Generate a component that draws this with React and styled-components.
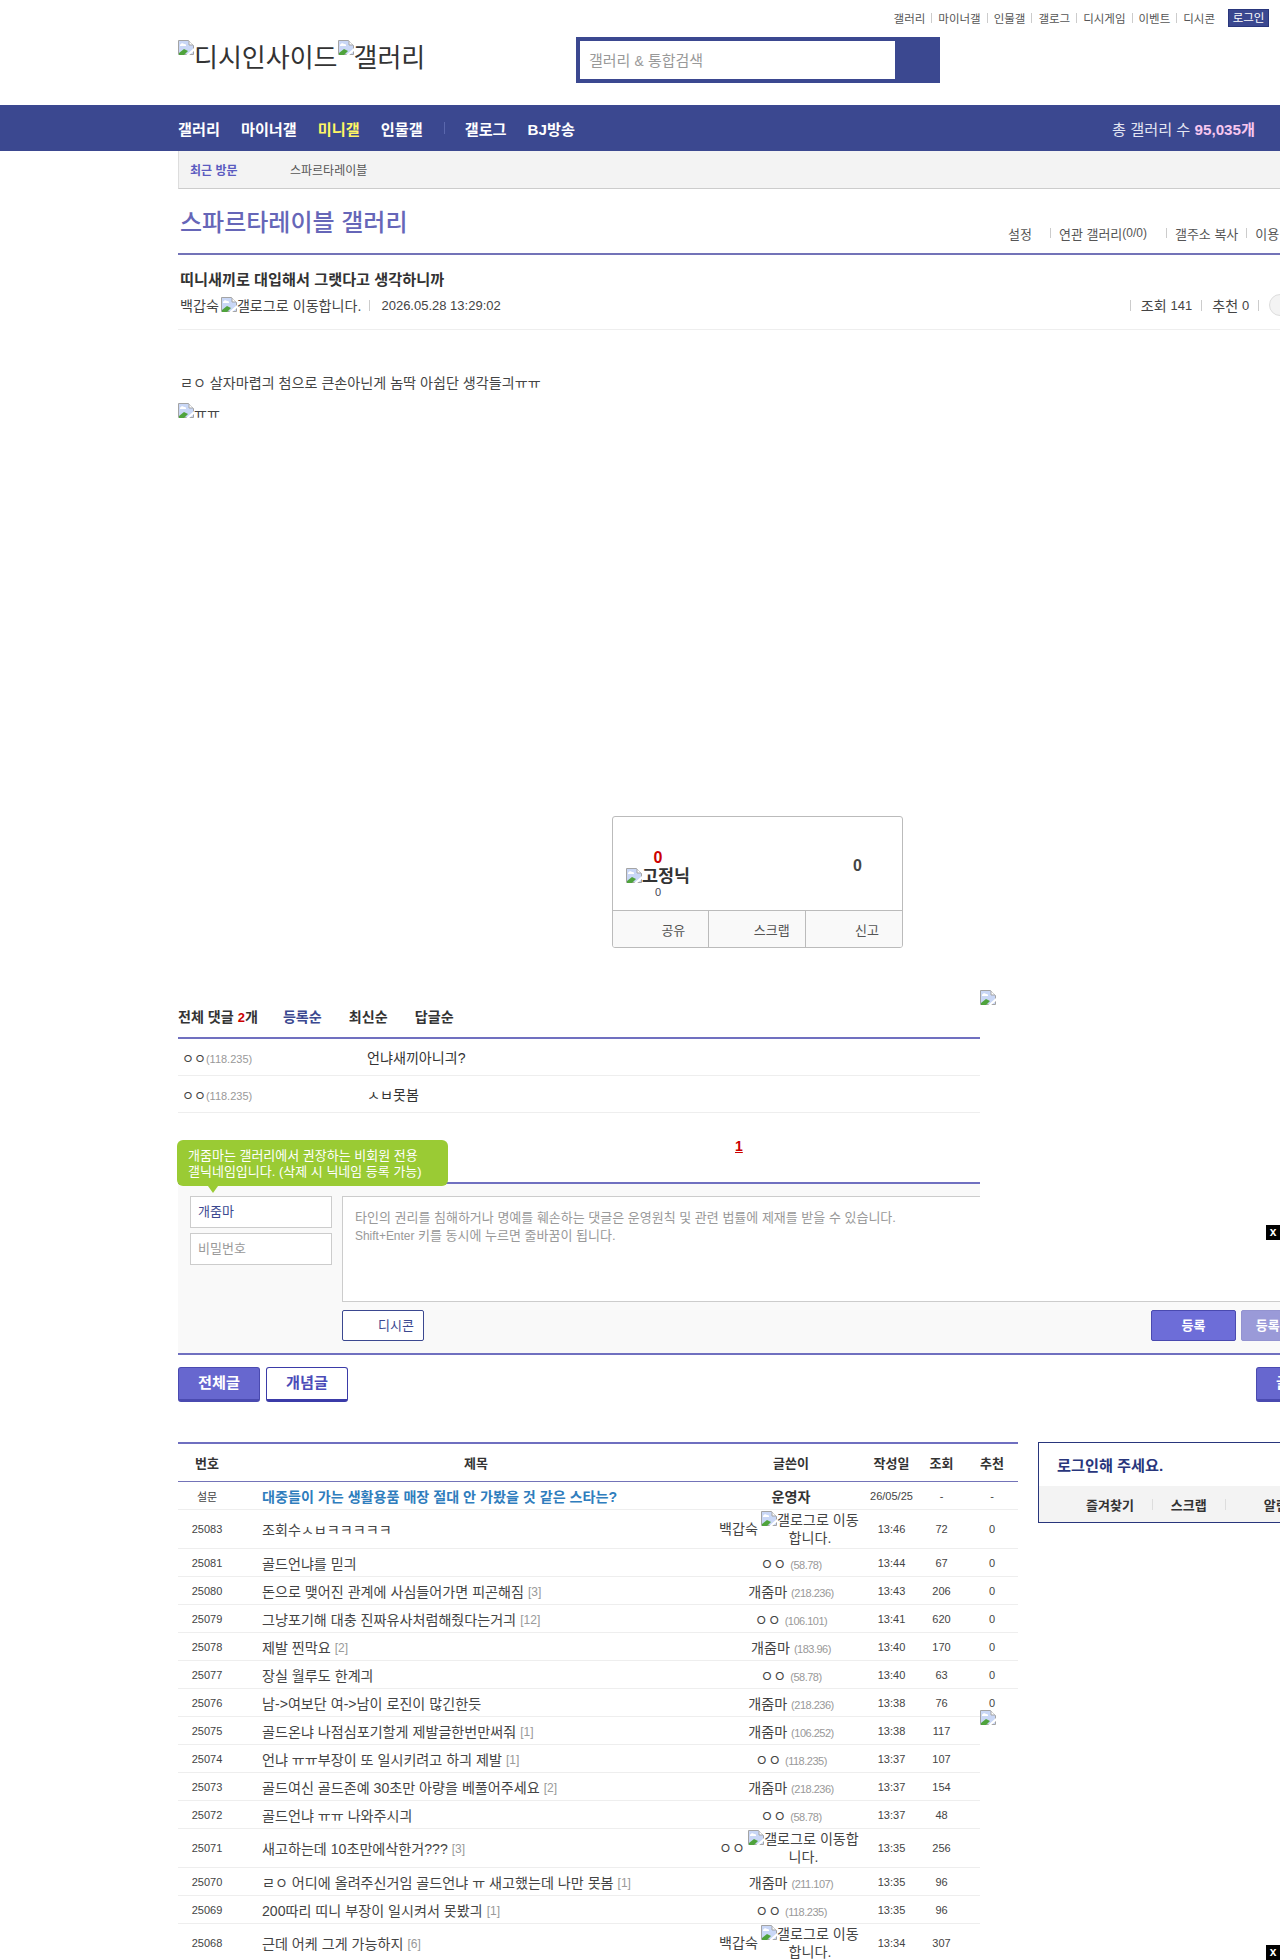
import React from 'react';
import styled, { createGlobalStyle } from 'styled-components';

// hangul in the reference runs a full em wide and Noto runs 0.92em,
// so hangul text sits ~8% above the nominal size and latin runs scale back
const GlobalStyle = createGlobalStyle`
  html, body {
    margin: 0;
    padding: 0;
    background: #fff;
  }
  body {
    font-family: "Liberation Sans", "Noto Sans CJK KR", sans-serif;
    font-size: 13px;
    color: #333;
  }
`;

const Latin = styled.span`
  font-size: .92em;
`;

const Page = styled.div`
  position: relative;
  width: 1280px;
  height: 1960px;
  overflow: hidden;
`;

const Header = styled.header`
  height: 105px;
  padding-left: 178px;
  box-sizing: border-box;
`;

const TopLinks = styled.div`
  display: flex;
  align-items: center;
  justify-content: flex-end;
  height: 18px;
  padding: 9px 11px 0 0;
  font-size: 11.5px;
  color: #555;
`;

const TopLink = styled.span`
  display: flex;
  align-items: center;
  &:not(:last-of-type)::after {
    content: '';
    width: 1px;
    height: 10px;
    margin: 0 6px;
    background: #ccc;
  }
`;

const LoginButton = styled.a`
  box-sizing: border-box;
  width: 41px;
  height: 18px;
  margin-left: 13px;
  border: 1px solid #29367c;
  background: #3b4890;
  color: #fff;
  text-align: center;
  line-height: 16px;
`;

const HeaderMain = styled.div`
  display: flex;
  align-items: flex-start;
  padding-top: 10px;
`;

const Logo = styled.div`
  display: flex;
  width: 398px;
  padding-top: 3px;
  font-size: 26px;
  line-height: 36px;
  color: #333;
`;

const LogoPart = styled.span`
  display: flex;
  align-items: flex-start;
`;

const SearchBox = styled.div`
  display: flex;
  width: 364px;
  height: 46px;
  box-sizing: border-box;
  border: 4px solid #3b4890;
  background: #3b4890;
`;

const SearchInput = styled.div`
  width: 306px;
  padding-left: 9px;
  background: #fff;
  color: #999;
  font-size: 15px;
  line-height: 39px;
`;

const Nav = styled.nav`
  display: flex;
  align-items: center;
  height: 46px;
  padding: 0 25px 0 178px;
  background: #3b4890;
  color: #fff;
`;

const NavItem = styled.span`
  margin-right: 21px;
  font-size: 15.2px;
  font-weight: bold;
  color: ${(p) => (p.$active ? '#fff664' : '#fff')};
`;

const NavDivider = styled.span`
  width: 1px;
  height: 12px;
  margin-right: 20px;
  background: #5a67ad;
`;

const NavTotal = styled.span`
  margin-left: auto;
  font-size: 15.2px;
  color: #e3e5f2;
  b {
    color: #f7c6ef;
  }
`;

const Main = styled.main`
  width: 1160px;
  margin-left: 178px;
`;

const RecentBar = styled.div`
  display: flex;
  align-items: center;
  height: 38px;
  box-sizing: border-box;
  padding-left: 11px;
  background: #f3f3f3;
  border-left: 1px solid #ddd;
  border-bottom: 1px solid #ccc;
  font-size: 12px;
`;

const RecentLabel = styled.b`
  width: 100px;
  color: #5b5bc0;
`;

const RecentName = styled.span`
  color: #555;
`;

const GalleryHead = styled.div`
  display: flex;
  justify-content: space-between;
  height: 64px;
  padding: 0 2px;
  border-bottom: 2px solid #7373b8;
`;

const GalleryTitle = styled.h1`
  margin: 16px 0 0;
  font-size: 24px;
  font-weight: 500;
  line-height: 36px;
  color: #6666b8;
`;

const GalleryLinks = styled.div`
  display: flex;
  align-items: center;
  width: 328px;
  height: 18px;
  margin-top: 35px;
  font-size: 13px;
  color: #555;
`;

const GalleryLink = styled.span`
  display: flex;
  align-items: center;
  white-space: pre;
  margin-right: 8px;
  &::after {
    content: '';
    display: ${(p) => (p.$noSep ? 'none' : 'block')};
    width: 1px;
    height: 10px;
    margin-left: ${(p) => p.$sep}px;
    background: #ccc;
  }
`;

const PostHead = styled.div`
  height: 75px;
  box-sizing: border-box;
  padding: 15px 2px 0;
  border-bottom: 1px solid #eee;
`;

const PostTitle = styled.h2`
  margin: 0;
  font-size: 15.2px;
  font-weight: bold;
  line-height: 20px;
  color: #333;
`;

const PostMeta = styled.div`
  display: flex;
  align-items: center;
  height: 24px;
  margin-top: 3px;
  font-size: 14.1px;
  color: #444;
  white-space: pre;
`;

const MetaIcon = styled.span`
  display: flex;
  margin-left: 2px;
`;

const MetaDate = styled.span`
  display: flex;
  align-items: center;
  margin-left: 8px;
  font-size: 13px;
  &::before {
    content: '';
    width: 1px;
    height: 11px;
    margin-right: 11px;
    background: #ccc;
  }
`;

const MetaCounts = styled.div`
  display: flex;
  align-items: center;
  margin-left: 620px;
`;

const MetaCount = styled.span`
  display: flex;
  align-items: center;
  white-space: pre;
  &::before {
    content: '';
    width: 1px;
    height: 11px;
    margin: 0 10px 0 9px;
    background: #ccc;
  }
`;

const RoundButton = styled.span`
  width: 22px;
  height: 22px;
  box-sizing: border-box;
  flex: none;
  border: 1px solid #ddd;
  border-radius: 50%;
  background: #f3f3f3;
`;

const PostBody = styled.div`
  padding: 43px 2px 0;
  font-size: 14.1px;
  line-height: 20px;
  color: #444;
`;

const AltImage = styled.div`
  display: flex;
  align-items: flex-start;
  height: 413px;
  margin: 10px 0 0 -2px;
  line-height: 20px;
`;

const RecBox = styled.section`
  width: 291px;
  height: 132px;
  margin-left: 434px;
  box-sizing: border-box;
  border: 1px solid #bbb;
  border-radius: 3px;
  overflow: hidden;
  display: flex;
  flex-direction: column;
`;

const RecTop = styled.div`
  position: relative;
  height: 93px;
  border-bottom: 1px solid #bbb;
  flex: none;
`;

const RecLeft = styled.div`
  display: flex;
  flex-direction: column;
  align-items: center;
  width: 64px;
  margin: 32px 0 0 13px;
  color: #333;
`;

const RecUp = styled.b`
  font-size: 16px;
  line-height: 18px;
  color: #c00;
`;

const RecNick = styled.b`
  display: flex;
  align-items: center;
  margin-top: -1px;
  font-size: 17.4px;
  line-height: 20px;
  color: #333;
`;

const RecSmall = styled.span`
  font-size: 11px;
  line-height: 12px;
  color: #445;
`;

const RecDown = styled.b`
  position: absolute;
  right: 40px;
  top: 40px;
  font-size: 16px;
  line-height: 18px;
  color: #444;
`;

const RecActions = styled.div`
  display: grid;
  grid-template-columns: repeat(3, 1fr);
  flex: 1;
  background: #f9f9f9;
`;

const RecAction = styled.span`
  box-sizing: border-box;
  text-align: right;
  padding-right: ${(p) => p.$pad}px;
  border-right: 1px solid #bbb;
  font-size: 13px;
  line-height: 40px;
  color: #555;
  &:last-child {
    border-right: 0;
  }
`;

const CommentTabs = styled.div`
  display: flex;
  align-items: center;
  height: 20px;
  margin-top: 58px;
  padding-bottom: 11px;
  border-bottom: 2px solid #7070c0;
  font-size: 14.1px;
  font-weight: bold;
  color: #333;
  em {
    font-size: .92em;
    font-style: normal;
    color: #c00;
  }
`;

const CommentTab = styled.span`
  margin-right: ${(p) => p.$gap || 27}px;
  color: ${(p) => (p.$active ? '#3b4890' : '#333')};
`;

const CommentRow = styled.div`
  display: flex;
  align-items: center;
  height: 37px;
  box-sizing: border-box;
  padding-left: 4px;
  border-bottom: 1px solid #eee;
`;

const CommentNick = styled.span`
  width: 185px;
  font-size: 13px;
  color: #444;
  small {
    font-size: 11px;
    color: #999;
  }
`;

const CommentText = styled.span`
  font-size: 14.1px;
  color: #333;
`;

const CommentPager = styled.div`
  position: relative;
  height: 69px;
  border-bottom: 2px solid #7070c0;
  text-align: center;
`;

const PagerNumber = styled.a`
  position: absolute;
  left: 557px;
  top: 25px;
  font-size: 14px;
  font-weight: bold;
  color: #c00;
  text-decoration: underline;
`;

const Tooltip = styled.div`
  position: absolute;
  left: -1px;
  top: 27px;
  width: 271px;
  height: 46px;
  box-sizing: border-box;
  padding: 8px 11px;
  border-radius: 6px;
  background: #9acb34;
  color: #fff;
  font-size: 13px;
  line-height: 16px;
  text-align: left;
  white-space: nowrap;
  &::after {
    content: '';
    position: absolute;
    left: 31px;
    top: 46px;
    border: 5px solid transparent;
    border-top: 7px solid #9acb34;
    border-bottom: 0;
  }
`;

const CommentForm = styled.div`
  height: 171px;
  box-sizing: border-box;
  padding: 12px 12px 0;
  background: #f9f9f9;
  border-bottom: 2px solid #7070c0;
`;

const FormTop = styled.div`
  display: flex;
  gap: 10px;
`;

const FormFields = styled.div`
  display: flex;
  flex-direction: column;
  gap: 5px;
  width: 142px;
`;

const FormInput = styled.div`
  height: 32px;
  box-sizing: border-box;
  padding-left: 7px;
  border: 1px solid #ccc;
  background: #fff;
  font-size: 13px;
  line-height: 30px;
  color: ${(p) => (p.$filled ? '#3b4890' : '#999')};
`;

const FormText = styled.div`
  flex: 1;
  height: 106px;
  box-sizing: border-box;
  padding: 12px 12px 0;
  border: 1px solid #ccc;
  background: #fff;
  font-size: 13px;
  line-height: 18px;
  color: #999;
  white-space: nowrap;
`;

const FormBottom = styled.div`
  display: flex;
  align-items: center;
  margin: 8px 0 0 152px;
`;

const DcconButton = styled.span`
  box-sizing: border-box;
  width: 82px;
  height: 31px;
  padding-right: 9px;
  border: 1px solid #3b4890;
  border-radius: 2px;
  background: #fff;
  text-align: right;
  font-size: 13px;
  line-height: 29px;
  color: #3b4890;
`;

const SubmitButton = styled.span`
  box-sizing: border-box;
  width: 85px;
  height: 31px;
  flex: none;
  margin-left: ${(p) => p.$gap}px;
  border: 1px solid ${(p) => (p.$dim ? '#9393d0' : '#4a4ab0')};
  border-radius: 2px;
  background: ${(p) => (p.$dim ? '#9a9ad8' : '#6d6dd8')};
  color: #fff;
  text-align: center;
  font-size: 13px;
  font-weight: bold;
  line-height: 29px;
  white-space: nowrap;
`;

const ListTabs = styled.div`
  display: flex;
  gap: 6px;
  margin-top: 12px;
`;

const ListTab = styled.span`
  box-sizing: border-box;
  width: 82px;
  height: 35px;
  margin-left: ${(p) => p.$push || 0}px;
  border: 1px solid ${(p) => (p.$filled ? '#4a4ab0' : '#3b3ba8')};
  border-bottom-width: 3px;
  border-radius: 3px;
  background: ${(p) => (p.$filled ? '#6767cf' : '#fff')};
  color: ${(p) => (p.$filled ? '#fff' : '#4b4bb8')};
  text-align: center;
  font-size: 15.2px;
  font-weight: bold;
  line-height: 30px;
`;

const ListArea = styled.div`
  display: flex;
  gap: 20px;
  margin-top: 40px;
`;

const ListTable = styled.table`
  width: 840px;
  flex: none;
  border-collapse: collapse;
  table-layout: fixed;
  border-top: 2px solid #6f6fc0;
`;

const HeadCell = styled.th`
  height: 37px;
  padding: 0;
  border-bottom: 1px solid #7373b8;
  font-size: 13px;
  font-weight: bold;
  color: #333;
  text-align: center;
`;

const Row = styled.tr`
  height: ${(p) => (p.$tall ? 39 : 28)}px;
  td {
    border-bottom: 1px solid #eee;
  }
`;

const NumCell = styled.td`
  padding: 0;
  text-align: center;
  font-size: 11px;
  color: #444;
`;

const TitleCell = styled.td`
  padding: 0 0 0 26px;
  font-size: 14.1px;
  color: #444;
  white-space: nowrap;
  small {
    font-size: 12px;
    color: #999;
    margin-left: 4px;
    vertical-align: 1px;
  }
`;

const NoticeTitle = styled.b`
  color: #2f7dbd;
`;

const WriterCell = styled.td`
  padding: 0;
  text-align: center;
  font-size: 14.1px;
  color: #444;
  small {
    font-size: 11px;
    letter-spacing: -.5px;
    color: #999;
  }
`;

const StaffName = styled.b`
  color: #333;
`;

const WriterSplit = styled.div`
  display: flex;
  align-items: center;
  padding: 0 4px 0 3px;
  line-height: 18px;
`;

const WriterAlt = styled.span`
  flex: 1;
  text-align: center;
  white-space: nowrap;
`;

const SidePanel = styled.aside`
  width: 300px;
  height: 81px;
  box-sizing: border-box;
  flex: none;
  border: 1px solid #29367c;
`;

const SideTitle = styled.div`
  height: 43px;
  padding-left: 18px;
  font-size: 15.2px;
  font-weight: bold;
  line-height: 45px;
  color: #29367c;
`;

const SideLinks = styled.div`
  display: flex;
  align-items: center;
  height: 36px;
  padding-left: 47px;
  background: #f3f3f3;
  font-size: 13px;
  font-weight: bold;
  color: #333;
`;

const SideLink = styled.span`
  display: flex;
  align-items: center;
  white-space: nowrap;
  &:not(:last-child)::after {
    content: '';
    width: 1px;
    height: 11px;
    margin: 0 ${(p) => p.$after}px 0 18px;
    background: #ddd;
  }
`;

const AdSlot = styled.div`
  position: absolute;
  left: 980px;
  top: ${(p) => p.$top}px;
  width: 300px;
  height: 250px;
  background: #fff;
`;

const AdClose = styled.span`
  position: absolute;
  right: 0;
  bottom: 0;
  width: 14px;
  height: 15px;
  background: #000;
  color: #fff;
  font-size: 12px;
  font-weight: bold;
  line-height: 14px;
  text-align: center;
`;

const BrokenSvg = styled.svg`
  flex: none;
  vertical-align: top;
`;

function BrokenImage() {
  return (
    <BrokenSvg width="16" height="16" viewBox="0 0 16 16">
      <path d="M.5.5h10l5 5v9h-15z" fill="#c9d7f6" stroke="#a4a4a4" />
      <path d="M11 1v4h4" fill="#fff" stroke="#a4a4a4" />
      <path d="M2 5c1-2 3-2 4-1 1 0 2 0 2 1v1H2z" fill="#fff" />
      <path d="M1 15v-2l5-4 4 2-4 4z" fill="#4fa33c" />
      <path d="M16 8 7 16h3l6-5z" fill="#fff" />
    </BrokenSvg>
  );
}

const topLinks = ['갤러리', '마이너갤', '인물갤', '갤로그', '디시게임', '이벤트', '디시콘'];

const rows = [
  { no: '25083', title: '조회수ㅅㅂㅋㅋㅋㅋㅋ', nick: '백갑숙', alt: ['갤로그로 이동', '합니다.'], time: '13:46', view: 72 },
  { no: '25081', title: '골드언냐를 믿긔', nick: 'ㅇㅇ', ip: '(58.78)', time: '13:44', view: 67 },
  { no: '25080', title: '돈으로 맺어진 관계에 사심들어가면 피곤해짐', cnt: '[3]', nick: '개줌마', ip: '(218.236)', time: '13:43', view: 206 },
  { no: '25079', title: '그냥포기해 대충 진짜유사처럼해줬다는거긔', cnt: '[12]', nick: 'ㅇㅇ', ip: '(106.101)', time: '13:41', view: 620 },
  { no: '25078', title: '제발 찐막요', cnt: '[2]', nick: '개줌마', ip: '(183.96)', time: '13:40', view: 170 },
  { no: '25077', title: '장실 월루도 한계긔', nick: 'ㅇㅇ', ip: '(58.78)', time: '13:40', view: 63 },
  { no: '25076', title: '남->여보단 여->남이 로진이 많긴한듯', nick: '개줌마', ip: '(218.236)', time: '13:38', view: 76 },
  { no: '25075', title: '골드온냐 나점심포기할게 제발글한번만써줘', cnt: '[1]', nick: '개줌마', ip: '(106.252)', time: '13:38', view: 117 },
  { no: '25074', title: '언냐 ㅠㅠ부장이 또 일시키려고 하긔 제발', cnt: '[1]', nick: 'ㅇㅇ', ip: '(118.235)', time: '13:37', view: 107 },
  { no: '25073', title: '골드여신 골드존예 30초만 아량을 베풀어주세요', cnt: '[2]', nick: '개줌마', ip: '(218.236)', time: '13:37', view: 154 },
  { no: '25072', title: '골드언냐 ㅠㅠ 나와주시긔', nick: 'ㅇㅇ', ip: '(58.78)', time: '13:37', view: 48 },
  { no: '25071', title: '새고하는데 10초만에삭한거???', cnt: '[3]', nick: 'ㅇㅇ', alt: ['갤로그로 이동합', '니다.'], time: '13:35', view: 256 },
  { no: '25070', title: 'ㄹㅇ 어디에 올려주신거임 골드언냐 ㅠ 새고했는데 나만 못봄', cnt: '[1]', nick: '개줌마', ip: '(211.107)', time: '13:35', view: 96 },
  { no: '25069', title: '200따리 띠니 부장이 일시켜서 못봤긔', cnt: '[1]', nick: 'ㅇㅇ', ip: '(118.235)', time: '13:35', view: 96 },
  { no: '25068', title: '근데 어케 그게 가능하지', cnt: '[6]', nick: '백갑숙', alt: ['갤로그로 이동', '합니다.'], time: '13:34', view: 307 },
];

export default function App() {
  return (
    <Page>
      <GlobalStyle />
      <Header>
        <TopLinks>
          {topLinks.map((t) => (
            <TopLink key={t}>{t}</TopLink>
          ))}
          <LoginButton>로그인</LoginButton>
        </TopLinks>
        <HeaderMain>
          <Logo>
            <LogoPart>
              <BrokenImage />
              디시인사이드
            </LogoPart>
            <LogoPart>
              <BrokenImage />
              갤러리
            </LogoPart>
          </Logo>
          <SearchBox>
            <SearchInput>
              갤러리 <Latin>&amp;</Latin> 통합검색
            </SearchInput>
          </SearchBox>
        </HeaderMain>
      </Header>

      <Nav>
        <NavItem>갤러리</NavItem>
        <NavItem>마이너갤</NavItem>
        <NavItem $active>미니갤</NavItem>
        <NavItem>인물갤</NavItem>
        <NavDivider />
        <NavItem>갤로그</NavItem>
        <NavItem>BJ방송</NavItem>
        <NavTotal>
          총 갤러리 수 <b>95,035개</b>
        </NavTotal>
      </Nav>

      <Main>
        <RecentBar>
          <RecentLabel>최근 방문</RecentLabel>
          <RecentName>스파르타레이블</RecentName>
        </RecentBar>

        <GalleryHead>
          <GalleryTitle>스파르타레이블 갤러리</GalleryTitle>
          <GalleryLinks>
            <GalleryLink $sep={18}>설정</GalleryLink>
            <GalleryLink $sep={19}>
              연관 갤러리<Latin>(0/0)</Latin>
            </GalleryLink>
            <GalleryLink $sep={8}>갤주소 복사</GalleryLink>
            <GalleryLink $noSep>이용 안내</GalleryLink>
          </GalleryLinks>
        </GalleryHead>

        <PostHead>
          <PostTitle>띠니새끼로 대입해서 그랫다고 생각하니까</PostTitle>
          <PostMeta>
            백갑숙
            <MetaIcon>
              <BrokenImage />
            </MetaIcon>
            갤로그로 이동합니다.
            <MetaDate>2026.05.28 13:29:02</MetaDate>
            <MetaCounts>
              <MetaCount>
                조회 <Latin>141</Latin>
              </MetaCount>
              <MetaCount>
                추천 <Latin>0</Latin>
              </MetaCount>
              <MetaCount />
              <RoundButton />
            </MetaCounts>
          </PostMeta>
        </PostHead>

        <PostBody>
          ㄹㅇ 살자마렵긔 첨으로 큰손아닌게 놈딱 아쉽단 생각들긔ㅠㅠ
          <AltImage>
            <BrokenImage />
            ㅠㅠ
          </AltImage>
        </PostBody>

        <RecBox>
          <RecTop>
            <RecLeft>
              <RecUp>0</RecUp>
              <RecNick>
                <BrokenImage />
                고정닉
              </RecNick>
              <RecSmall>0</RecSmall>
            </RecLeft>
            <RecDown>0</RecDown>
          </RecTop>
          <RecActions>
            <RecAction $pad={23}>공유</RecAction>
            <RecAction $pad={15}>스크랩</RecAction>
            <RecAction $pad={23}>신고</RecAction>
          </RecActions>
        </RecBox>

        <CommentTabs>
          <CommentTab $gap={25}>
            전체 댓글 <em>2</em>개
          </CommentTab>
          <CommentTab $active>등록순</CommentTab>
          <CommentTab>최신순</CommentTab>
          <CommentTab>답글순</CommentTab>
        </CommentTabs>
        <CommentRow>
          <CommentNick>
            ㅇㅇ<small>(118.235)</small>
          </CommentNick>
          <CommentText>언냐새끼아니긔?</CommentText>
        </CommentRow>
        <CommentRow>
          <CommentNick>
            ㅇㅇ<small>(118.235)</small>
          </CommentNick>
          <CommentText>ㅅㅂ못봄</CommentText>
        </CommentRow>

        <CommentPager>
          <Tooltip>
            개줌마는 갤러리에서 권장하는 비회원 전용
            <br />
            갤닉네임입니다. (삭제 시 닉네임 등록 가능)
          </Tooltip>
          <PagerNumber>1</PagerNumber>
        </CommentPager>

        <CommentForm>
          <FormTop>
            <FormFields>
              <FormInput $filled>개줌마</FormInput>
              <FormInput>비밀번호</FormInput>
            </FormFields>
            <FormText>
              타인의 권리를 침해하거나 명예를 훼손하는 댓글은 운영원칙 및 관련 법률에 제재를 받을 수 있습니다.
              <br />
              <Latin>Shift+Enter</Latin> 키를 동시에 누르면 줄바꿈이 됩니다.
            </FormText>
          </FormTop>
          <FormBottom>
            <DcconButton>디시콘</DcconButton>
            <SubmitButton $gap={727}>등록</SubmitButton>
            <SubmitButton $gap={5} $dim>등록+추천</SubmitButton>
          </FormBottom>
        </CommentForm>

        <ListTabs>
          <ListTab $filled>전체글</ListTab>
          <ListTab>개념글</ListTab>
          <ListTab $filled $push={902}>글쓰기</ListTab>
        </ListTabs>

        <ListArea>
          <ListTable>
            <colgroup>
              <col style={{ width: 58 }} />
              <col style={{ width: 480 }} />
              <col style={{ width: 150 }} />
              <col style={{ width: 51 }} />
              <col style={{ width: 49 }} />
              <col style={{ width: 52 }} />
            </colgroup>
            <thead>
              <tr>
                <HeadCell>번호</HeadCell>
                <HeadCell>제목</HeadCell>
                <HeadCell>글쓴이</HeadCell>
                <HeadCell>작성일</HeadCell>
                <HeadCell>조회</HeadCell>
                <HeadCell>추천</HeadCell>
              </tr>
            </thead>
            <tbody>
              <Row>
                <NumCell>설문</NumCell>
                <TitleCell>
                  <NoticeTitle>대중들이 가는 생활용품 매장 절대 안 가봤을 것 같은 스타는?</NoticeTitle>
                </TitleCell>
                <WriterCell>
                  <StaffName>운영자</StaffName>
                </WriterCell>
                <NumCell>26/05/25</NumCell>
                <NumCell>-</NumCell>
                <NumCell>-</NumCell>
              </Row>
              {rows.map((r) => (
                <Row key={r.no} $tall={!!r.alt}>
                  <NumCell>{r.no}</NumCell>
                  <TitleCell>
                    {r.title}
                    {r.cnt && <small>{r.cnt}</small>}
                  </TitleCell>
                  <WriterCell>
                    {r.alt ? (
                      <WriterSplit>
                        {r.nick}
                        <WriterAlt>
                          <BrokenImage />
                          {r.alt[0]}
                          <br />
                          {r.alt[1]}
                        </WriterAlt>
                      </WriterSplit>
                    ) : (
                      <>
                        {r.nick} <small>{r.ip}</small>
                      </>
                    )}
                  </WriterCell>
                  <NumCell>{r.time}</NumCell>
                  <NumCell>{r.view}</NumCell>
                  <NumCell>0</NumCell>
                </Row>
              ))}
            </tbody>
          </ListTable>
          <SidePanel>
            <SideTitle>로그인해 주세요.</SideTitle>
            <SideLinks>
              <SideLink $after={18}>즐겨찾기</SideLink>
              <SideLink $after={38}>스크랩</SideLink>
              <SideLink>알림</SideLink>
            </SideLinks>
          </SidePanel>
        </ListArea>
      </Main>

      <AdSlot $top={990}>
        <BrokenImage />
        <AdClose>x</AdClose>
      </AdSlot>
      <AdSlot $top={1710}>
        <BrokenImage />
        <AdClose>x</AdClose>
      </AdSlot>
    </Page>
  );
}
